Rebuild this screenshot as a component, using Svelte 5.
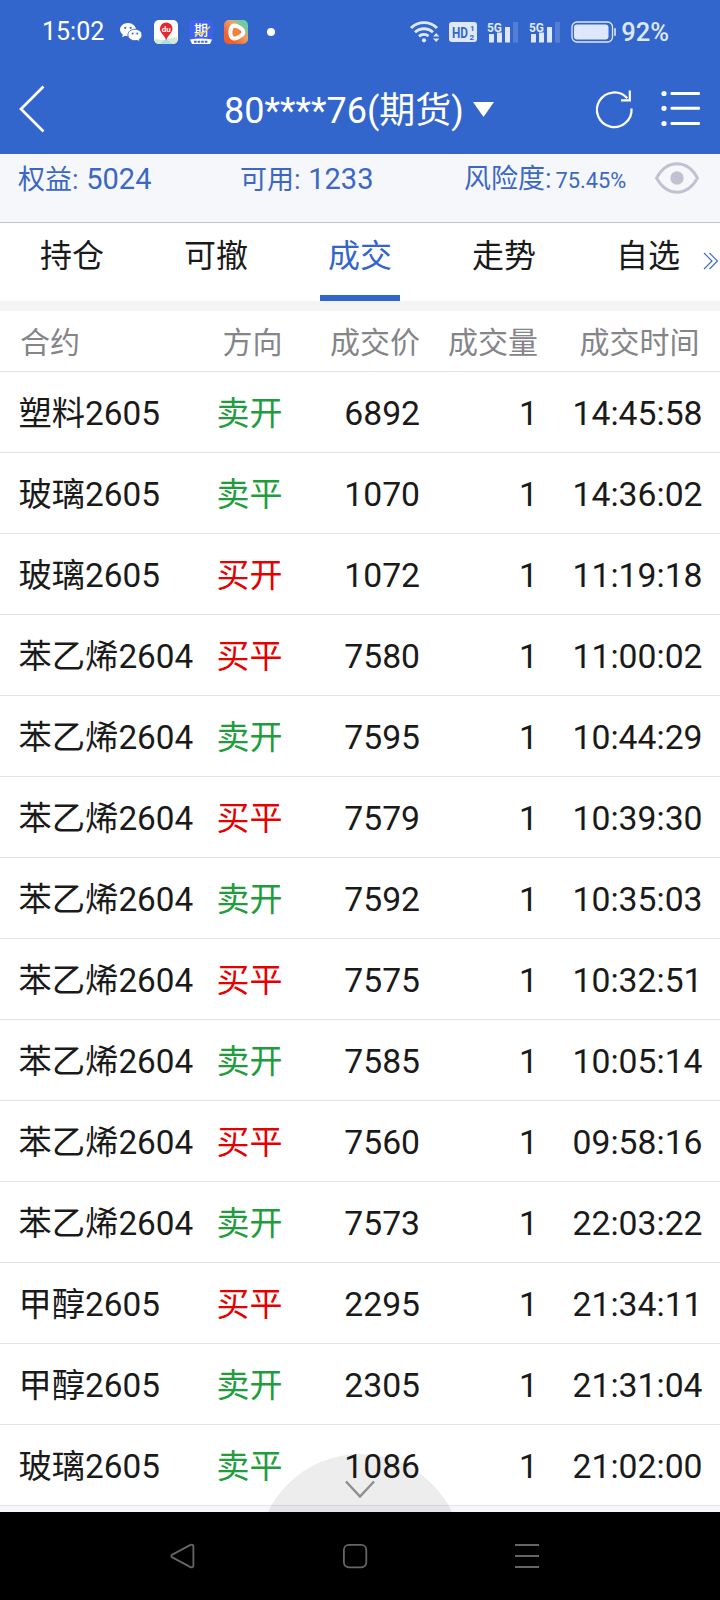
<script lang="ts">
  type Side = '卖开' | '卖平' | '买开' | '买平';

  type Trade = {
    contract: string;
    side: Side;
    price: number;
    volume: number;
    time: string;
  };

  const TABS = ['持仓', '可撤', '成交', '走势', '自选'];
  const COLUMNS = ['合约', '方向', '成交价', '成交量', '成交时间'];

  const trades: Trade[] = [
    { contract: '塑料2605', side: '卖开', price: 6892, volume: 1, time: '14:45:58' },
    { contract: '玻璃2605', side: '卖平', price: 1070, volume: 1, time: '14:36:02' },
    { contract: '玻璃2605', side: '买开', price: 1072, volume: 1, time: '11:19:18' },
    { contract: '苯乙烯2604', side: '买平', price: 7580, volume: 1, time: '11:00:02' },
    { contract: '苯乙烯2604', side: '卖开', price: 7595, volume: 1, time: '10:44:29' },
    { contract: '苯乙烯2604', side: '买平', price: 7579, volume: 1, time: '10:39:30' },
    { contract: '苯乙烯2604', side: '卖开', price: 7592, volume: 1, time: '10:35:03' },
    { contract: '苯乙烯2604', side: '买平', price: 7575, volume: 1, time: '10:32:51' },
    { contract: '苯乙烯2604', side: '卖开', price: 7585, volume: 1, time: '10:05:14' },
    { contract: '苯乙烯2604', side: '买平', price: 7560, volume: 1, time: '09:58:16' },
    { contract: '苯乙烯2604', side: '卖开', price: 7573, volume: 1, time: '22:03:22' },
    { contract: '甲醇2605', side: '买平', price: 2295, volume: 1, time: '21:34:11' },
    { contract: '甲醇2605', side: '卖开', price: 2305, volume: 1, time: '21:31:04' },
    { contract: '玻璃2605', side: '卖平', price: 1086, volume: 1, time: '21:02:00' }
  ];

  let activeTab = $state('成交');
</script>

{#snippet signal()}
  <svg class="signal" width="32" height="24" viewBox="0 0 32 24">
    <text x="0" y="11.500" font-size="12.500" font-weight="700" textLength="15" lengthAdjust="spacingAndGlyphs">5G</text>
    <rect x="2" y="14" width="5" height="8.500" />
    <rect x="10" y="12.500" width="5" height="10" />
    <rect x="18" y="7" width="5" height="15.500" />
    <rect x="26" y="2" width="5" height="20.500" opacity="0.2" />
  </svg>
{/snippet}

<div class="screen">
  <div class="status">
    <div class="status-left">
      <span class="clock">15:02</span>
      <svg width="24" height="24" viewBox="0 0 24 24">
        <path d="M9 3C4.600 3 1 5.900 1 9.600c0 2.100 1.100 3.800 2.800 5L3.200 17.300l3-1.500c.9.200 1.800.4 2.800.4 4.400 0 8-3 8-6.600S13.400 3 9 3z" fill="#fff" />
        <circle cx="6.200" cy="7.800" r="1.100" fill="#3366cc" />
        <circle cx="11.600" cy="7.800" r="1.100" fill="#3366cc" />
        <path d="M16 9.200c-4 0-7.100 2.600-7.100 5.800S12 20.700 16 20.700c.8 0 1.600-.1 2.300-.3l2.600 1.300-.6-2.300c1.700-1.100 2.700-2.600 2.700-4.400 0-3.200-3-5.800-7-5.800z" fill="#fff" stroke="#3366cc" stroke-width="0.900" />
        <circle cx="13.600" cy="13.500" r="1" fill="#3366cc" />
        <circle cx="18.300" cy="13.500" r="1" fill="#3366cc" />
      </svg>
      <svg class="app" width="24" height="24" viewBox="0 0 24 24">
        <rect width="24" height="24" rx="5" fill="#fff" />
        <path d="M1 19l8 1 3-1 11-2v3a4 4 0 0 1-4 4H5a4 4 0 0 1-4-4z" fill="#d5ebcf" />
        <path d="M6 24l6-5 7 5z" fill="#a9dcf5" />
        <path d="M12.200 2.500a6.300 6.300 0 0 1 6.300 6.300c0 3.900-3.800 5.400-6.300 11.200C9.700 14.200 5.900 12.700 5.900 8.800a6.300 6.300 0 0 1 6.300-6.300z" fill="#e8262c" />
        <text x="12.200" y="12" text-anchor="middle" font-size="8" font-weight="700" fill="#fff">du</text>
      </svg>
      <svg class="app" width="24" height="24" viewBox="0 0 24 24">
        <rect width="24" height="24" rx="5" fill="#3d63ee" />
        <path d="M1 19.500q11-2 22 0l-2 4.500H3z" fill="#fff" />
        <text class="cjk" x="12" y="15" text-anchor="middle" font-size="14" font-weight="500" fill="#fff">期</text>
        <path d="M6 15.500l5-3 3 1 7-7" stroke="#f2c84b" stroke-width="1.500" fill="none" />
        <path d="M5 21.800h14" stroke="#4a68cc" stroke-width="2" stroke-dasharray="2.600 1" />
      </svg>
      <svg class="app" width="24" height="24" viewBox="0 0 24 24">
        <defs>
          <linearGradient id="play" x1="0" y1="1" x2="1" y2="0">
            <stop offset="0.250" stop-color="#f4602c" />
            <stop offset="0.600" stop-color="#e8a468" />
            <stop offset="0.850" stop-color="#5fd3a8" />
          </linearGradient>
        </defs>
        <rect width="24" height="24" rx="5" fill="url(#play)" />
        <path d="M7.500 7.500c1.300-2.600 4.200-2 6.800-.7 3 1.500 5.200 3.400 5 5.600-.2 2.300-3 4-5.800 5.300-2.800 1.300-5.600 1.300-6.600-1.700-.8-2.500-.7-6 .6-8.500z" fill="#f0843c" stroke="#fff" stroke-width="4" />
      </svg>
      <span class="dot"></span>
    </div>
    <div class="status-right">
      <svg width="30" height="24" viewBox="0 0 30 24" fill="none" stroke="#dfe8fb" stroke-width="2.900">
        <path d="M1 8a18.500 18.500 0 0 1 26 0" />
        <path d="M5 12.300a13 13 0 0 1 18 0" />
        <path d="M9 16.400a7.500 7.500 0 0 1 9.500-.3" />
        <circle cx="14" cy="20.300" r="2.100" fill="#dfe8fb" stroke="none" />
        <path d="M23 16.500l3.200-3.500 3.200 3.500zM23 18.500l3.200 3.500 3.200-3.500z" fill="#dfe8fb" stroke="none" />
      </svg>
      <svg class="hd" width="28" height="20" viewBox="0 0 28 20">
        <rect width="28" height="20" rx="3" fill="#dfe8fb" />
        <text x="3" y="15.500" font-size="15" textLength="16" lengthAdjust="spacingAndGlyphs">HD</text>
        <text x="21" y="8.500" font-size="8">1</text>
        <text x="20.500" y="18" font-size="8">2</text>
      </svg>
      {@render signal()}
      {@render signal()}
      <svg class="battery" width="46" height="22" viewBox="0 0 46 22">
        <rect x="1" y="1" width="40.500" height="20" rx="5" fill="none" stroke="#dfe8fb" stroke-width="1.300" />
        <rect x="3" y="3.500" width="34.500" height="15" rx="3" fill="#dfe8fb" />
        <rect x="43.200" y="7" width="1.600" height="8" rx="0.800" fill="#dfe8fb" />
      </svg>
      <span class="percent">92%</span>
    </div>
  </div>

  <header>
    <button class="back" aria-label="返回">
      <svg width="26" height="48" viewBox="0 0 26 48" fill="none" stroke="#fff" stroke-width="2.700">
        <path d="M24.500 1.500L2 24l22.500 22.500" />
      </svg>
    </button>
    <h1>
      80****76(期货)
      <svg width="21" height="15" viewBox="0 0 21 15"><path d="M0 0h21L10.500 15z" fill="#fff" /></svg>
    </h1>
    <div class="actions">
      <svg width="38" height="40" viewBox="0 0 38 40" fill="none" stroke="#fff" stroke-width="2.200">
        <path d="M35.500 19.500A17.300 17.300 0 1 1 31.200 9.300" />
        <path d="M33.800 1.500v9.800H25" />
      </svg>
      <svg width="40" height="40" viewBox="0 0 40 40">
        {#each [4.500, 19.300, 34.500] as y}
          <circle cx="4" cy={y} r="2.600" fill="#fff" />
          <rect x="10.500" y={y - 1.500} width="29.500" height="3" rx="1" fill="#fff" />
        {/each}
      </svg>
    </div>
  </header>

  <section class="summary">
    <div class="equity">权益: <b>5024</b></div>
    <div class="available">可用: <b>1233</b></div>
    <div class="risk">风险度:<b>75.45%</b></div>
    <svg class="eye" width="44" height="32" viewBox="0 0 44 32">
      <path d="M1.500 16C12-3 32-3 42.500 16 32 35 12 35 1.500 16z" fill="none" stroke="#c3c1d1" stroke-width="2.800" />
      <circle cx="22" cy="16" r="6.700" fill="#c3c1d1" />
    </svg>
  </section>

  <nav class="tabs">
    {#each TABS as tab}
      <button class="tab" class:active={tab === activeTab} onclick={() => (activeTab = tab)}>{tab}</button>
    {/each}
    <svg class="more" width="16" height="18" viewBox="0 0 16 18" fill="none" stroke="#3a68c4" stroke-width="1.100">
      <path d="M1 1l8 8-8 8M6.500 1l8 8-8 8" />
    </svg>
  </nav>

  <main>
    <div class="row head">
      {#each COLUMNS as column}
        <span>{column}</span>
      {/each}
    </div>
    {#each trades as trade}
      <div class="row">
        <span class="contract">{trade.contract}</span>
        <span class={trade.side.startsWith('买') ? 'buy' : 'sell'}>{trade.side}</span>
        <span>{trade.price}</span>
        <span>{trade.volume}</span>
        <span>{trade.time}</span>
      </div>
    {/each}
    <div class="expand">
      <svg width="30" height="19" viewBox="0 0 30 19" fill="none" stroke="#8d8d8d" stroke-width="2.400">
        <path d="M1 1.500l14 15 14-15" />
      </svg>
    </div>
  </main>

  <footer>
    <svg width="26" height="26" viewBox="0 0 26 26">
      <path d="M2.400 11.600L20 2.100q3.400-1.400 3.400 1.700v18.400q0 3.100-3.400 1.700L2.400 14.400q-2.200-1.400 0-2.800z" />
    </svg>
    <svg width="26" height="26" viewBox="0 0 26 26"><rect x="1.900" y="1.900" width="22.400" height="22.400" rx="5" /></svg>
    <svg width="26" height="26" viewBox="0 0 26 26"><path d="M1 2h24M1 13h24M1 24h24" /></svg>
  </footer>
</div>

<style>
  :global(body) {
    background: #000;
  }
  .screen {
    width: 720px;
    height: 1600px;
    display: flex;
    flex-direction: column;
    overflow: hidden;
    background: #f6f7fa;
    color: #1a1a1a;
    font-family: Roboto, 'Noto Sans CJK SC', sans-serif;
  }
  svg {
    display: block;
    flex: none;
    overflow: visible;
  }
  button {
    padding: 0;
    border: 0;
    background: none;
    color: inherit;
    font: inherit;
  }

  .status {
    height: 64px;
    flex: none;
    display: flex;
    justify-content: space-between;
    padding: 0 51px 0 42px;
    background: #3366cc;
    color: #fff;
  }
  .status-left,
  .status-right {
    display: flex;
    align-items: center;
  }
  .status-left {
    gap: 11px;
  }
  .clock {
    width: 66px;
    font-size: 25px;
    line-height: 66px;
  }
  .dot {
    width: 8px;
    height: 8px;
    margin-left: 8px;
    border-radius: 50%;
    background: #fff;
  }
  .signal {
    margin-left: 10px;
    fill: #dfe8fb;
  }
  .hd {
    margin-left: 9px;
    font-weight: 700;
    fill: #3366cc;
  }
  .battery {
    margin-left: 10px;
  }
  .percent {
    margin-left: 4px;
    color: #dfe8fb;
    font-size: 25.500px;
    font-weight: 500;
    line-height: 68px;
  }
  .cjk {
    font-family: 'Noto Sans CJK SC', sans-serif;
  }

  header {
    height: 90px;
    flex: none;
    display: grid;
    grid-template-columns: 200px 1fr 202px;
    align-items: center;
    background: #3366cc;
    color: #fff;
  }
  .back {
    justify-self: start;
    margin-left: 19px;
  }
  h1 {
    height: 86px;
    margin: 0;
    padding-top: 4px;
    display: flex;
    align-items: center;
    justify-content: center;
    gap: 9px;
    font-size: 36px;
    font-weight: 400;
    line-height: 86px;
    white-space: nowrap;
  }
  h1 svg {
    margin-bottom: 4px;
  }
  .actions {
    display: flex;
    justify-content: flex-end;
    gap: 26px;
    padding-right: 20px;
  }

  .summary {
    height: 69px;
    flex: none;
    box-sizing: border-box;
    display: grid;
    grid-template-columns: 222px 224px 191px 44px;
    padding-left: 18px;
    border-bottom: 1px solid #c3c5ca;
    color: #3a68c4;
    font-size: 27px;
    line-height: 50px;
    white-space: nowrap;
  }
  .summary b {
    margin-left: 1px;
    font-size: 29px;
    font-weight: 400;
  }
  .summary .risk b {
    margin-left: 4px;
    font-size: 21.800px;
  }
  .eye {
    margin-top: 8px;
  }

  .tabs {
    height: 78px;
    flex: none;
    display: grid;
    grid-template-columns: repeat(5, 144px);
    position: relative;
    border-bottom: 10px solid #f4f4f5;
    background: #fff;
  }
  .tab {
    display: flex;
    flex-direction: column;
    align-items: center;
    justify-content: space-between;
    font-size: 32px;
    line-height: 66px;
  }
  .tab::after {
    content: '';
    width: 80px;
    height: 6px;
  }
  .tab.active {
    color: #3366cc;
  }
  .tab.active::after {
    background: #3366cc;
  }
  .more {
    position: absolute;
    right: 1px;
    top: 29px;
  }

  main {
    position: relative;
    flex: 1;
    overflow: hidden;
  }
  .row {
    height: 80px;
    display: grid;
    grid-template-columns: 188.500px 76px 137.500px 118px 182px;
    align-items: baseline;
    padding-left: 18px;
    border-bottom: 1px solid #e3e3e7;
    background: #fff;
    font-size: 33.700px;
    line-height: 84px;
    text-align: right;
    white-space: nowrap;
  }
  .row span:first-child {
    padding-left: 0.500px;
    text-align: left;
  }
  .row span:last-child {
    padding-right: 17.500px;
  }
  .row .contract {
    font-size: 33.300px;
  }
  .row.head {
    height: 60px;
    color: #848489;
    font-size: 30px;
    line-height: 63px;
  }
  .row.head span:first-child {
    padding-left: 2px;
  }
  .row.head span:last-child {
    padding-right: 20.500px;
  }
  .row .buy,
  .row .sell {
    font-size: 33px;
  }
  .buy {
    color: #e60000;
  }
  .sell {
    color: #1f9d3d;
  }
  .expand {
    position: absolute;
    left: 258px;
    bottom: -146px;
    width: 204px;
    height: 204px;
    display: flex;
    justify-content: center;
    border-radius: 50%;
    background: rgba(0, 0, 0, 0.070);
  }
  .expand svg {
    margin-top: 26px;
  }

  footer {
    height: 88px;
    flex: none;
    display: flex;
    align-items: center;
    gap: 146px;
    padding-left: 170px;
    background: #000;
  }
  footer svg {
    fill: none;
    stroke: #666;
    stroke-width: 1.800;
  }
</style>
